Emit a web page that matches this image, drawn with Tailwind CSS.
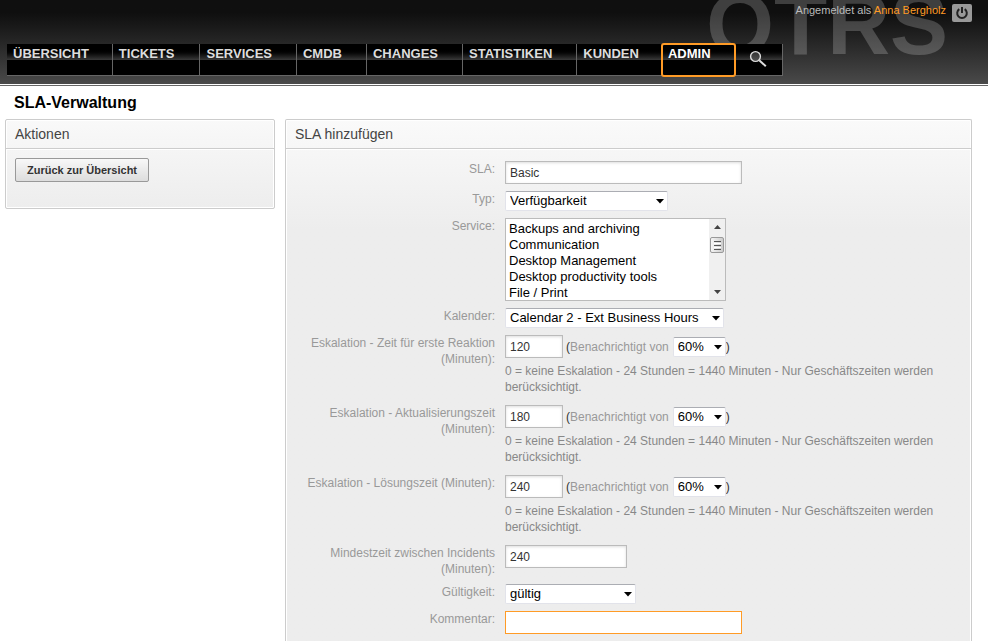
<!DOCTYPE html>
<html lang="de">
<head>
<meta charset="utf-8">
<title>SLA-Verwaltung</title>
<script src="https://cdn.jsdelivr.net/npm/@tailwindcss/browser@4"></script>
</head>
<body class="flex h-screen flex-col overflow-hidden bg-white font-['Liberation_Sans',Arial,sans-serif] text-xs text-[#999]">

<header class="relative flex h-[84px] shrink-0 flex-col justify-end overflow-hidden bg-linear-to-b from-[#0f0f0f] from-15% to-[#4a4a4a]">
  <div aria-hidden="true" class="absolute right-10 -top-7 text-[87px] leading-[104px] font-bold text-white/20">OTRS</div>
  <div class="absolute right-4 top-[3px] flex items-start gap-1.5 text-[11px] leading-[14px] text-[#bbb]">
    <span>Angemeldet als <a href="#" class="text-[#ff9b26]">Anna Bergholz</a></span>
    <button type="button" aria-label="Abmelden" class="mt-px flex h-[18px] w-5 items-center justify-center rounded-xs bg-[#999]">
      <svg class="size-3.5" viewBox="0 0 14 14" fill="none" stroke="#222" stroke-width="2"><path d="M4.3 3.2a4.8 4.8 0 1 0 5.4 0M7 1v6"/></svg>
    </button>
  </div>
  <nav class="relative mb-2 ml-[7px] flex h-8 w-max border-b border-[#666] bg-black bg-linear-to-b from-black from-30% to-[#3a3a3a] bg-[length:100%_16px] bg-no-repeat text-[13px] leading-[20px] font-bold text-[#ddd]">
    <a href="#" class="border-r border-[#666] pl-1.5 pr-[23px]">ÜBERSICHT</a>
    <a href="#" class="border-r border-[#666] pl-1.5 pr-[25px]">TICKETS</a>
    <a href="#" class="border-r border-[#666] pl-1.5 pr-6">SERVICES</a>
    <a href="#" class="border-r border-[#666] pl-1.5 pr-6">CMDB</a>
    <a href="#" class="border-r border-[#666] pl-1.5 pr-6">CHANGES</a>
    <a href="#" class="border-r border-[#666] pl-1.5 pr-6">STATISTIKEN</a>
    <a href="#" class="pl-1.5 pr-[23px]">KUNDEN</a>
    <a href="#" class="-mb-px rounded-xs pl-1.5 pr-6 text-white outline-2 -outline-offset-1 outline-[#ff9b26]">ADMIN</a>
    <a href="#" aria-label="Suche" class="flex w-12 items-start justify-center border-r border-[#666] pt-1.5">
      <svg class="size-[18px]" viewBox="0 0 18 18" fill="none" stroke="#ddd"><circle cx="6.5" cy="6.5" r="4.9" fill="#666" fill-opacity=".5" stroke-width="1.4"/><path d="M10.2 10.2l6.6 6" stroke-width="2"/></svg>
    </a>
  </nav>
</header>
<div class="mt-px shrink-0 border-t border-[#666]"></div>

<h1 class="mt-2 ml-3.5 text-base leading-[18px] font-bold text-black">SLA-Verwaltung</h1>

<main class="mt-[7px] mr-4 ml-[5px] flex min-h-0 flex-1 gap-2.5">
  <aside class="w-[270px] shrink-0 self-start rounded-xs border border-[#ccc] bg-linear-to-b from-[#f9f9f9] to-[#ededed] pb-[26px] shadow-[inset_0_0_0_1px_#fff]">
    <h2 class="border-b border-[#ccc] px-[9px] py-1.5 text-sm leading-4 text-[#444] shadow-[0_1px_0_#fff]">Aktionen</h2>
    <button type="button" class="mt-[9px] ml-[9px] block h-6 rounded-xs border border-[#999] bg-linear-to-b from-[#f8f8f8] to-[#ddd] px-[11px] text-[11px] font-bold text-[#333]">Zurück zur Übersicht</button>
  </aside>

  <section class="min-w-0 flex-1 overflow-hidden rounded-t-xs border border-b-0 border-[#ccc] bg-linear-to-b from-[#fafafa] to-[#ededed] to-[110px] shadow-[inset_1px_1px_0_#fff,inset_-1px_0_0_#fff]">
    <h2 class="border-b border-[#ccc] px-[9px] py-1.5 text-sm leading-4 text-[#444] shadow-[0_1px_0_#fff]">SLA hinzufügen</h2>
    <form class="grid grid-cols-[209px_1fr] gap-x-2.5 gap-y-[7px] pt-3 pr-5 leading-4">
      <label for="sla" class="text-right">SLA:</label>
      <div class="flex"><input id="sla" value="Basic" class="h-[23px] w-[237px] border border-[#bbb] bg-white px-1 text-xs text-[#333] shadow-[inset_0_1px_3px_#ddd]"></div>

      <label for="typ" class="text-right">Typ:</label>
      <div class="relative w-[163px]">
        <select id="typ" class="block h-5 w-full appearance-none rounded-xs border border-[#e2e3ea] border-t-[#abadb3] bg-white pl-1 text-[13px] leading-4 text-black"><option>Verfügbarkeit</option></select>
        <svg class="pointer-events-none absolute top-2 right-1 h-[5px] w-2" viewBox="0 0 8 5"><path d="M0 0h8L4 4.5z"/></svg>
      </div>

      <label for="service" class="text-right">Service:</label>
      <div class="flex h-[83px] w-[221px] border border-[#bbb] bg-white">
        <select id="service" multiple size="5" class="min-w-0 flex-1 overflow-hidden pt-0.5 text-[13px] text-black [scrollbar-width:none]">
          <option class="h-4 p-0 pl-[3px] leading-4">Backups and archiving</option>
          <option class="h-4 p-0 pl-[3px] leading-4">Communication</option>
          <option class="h-4 p-0 pl-[3px] leading-4">Desktop Management</option>
          <option class="h-4 p-0 pl-[3px] leading-4">Desktop productivity tools</option>
          <option class="h-4 p-0 pl-[3px] leading-4">File / Print</option>
        </select>
        <div aria-hidden="true" class="flex w-4 flex-col items-center bg-[#f0f0f0] py-1.5">
          <svg class="h-1 w-[7px]" viewBox="0 0 7 4" fill="#444"><path d="M0 4h7L3.500 0z"/></svg>
          <div class="mt-2 flex h-4 w-3.5 flex-col items-center justify-center gap-px rounded-xs border border-[#999] bg-linear-to-r from-[#f5f5f5] to-[#ccc]">
            <i class="h-px w-[7px] bg-[#555]"></i><i class="h-px w-[7px] bg-white"></i><i class="h-px w-[7px] bg-[#555]"></i><i class="h-px w-[7px] bg-white"></i><i class="h-px w-[7px] bg-[#555]"></i>
          </div>
          <svg class="mt-auto h-1 w-[7px]" viewBox="0 0 7 4" fill="#444"><path d="M0 0h7L3.500 4z"/></svg>
        </div>
      </div>

      <label for="kalender" class="text-right">Kalender:</label>
      <div class="relative w-[219px]">
        <select id="kalender" class="block h-5 w-full appearance-none rounded-xs border border-[#e2e3ea] border-t-[#abadb3] bg-white pl-1 text-[13px] leading-4 text-black"><option>Calendar 2 - Ext Business Hours</option></select>
        <svg class="pointer-events-none absolute top-2 right-1 h-[5px] w-2" viewBox="0 0 8 5"><path d="M0 0h8L4 4.5z"/></svg>
      </div>

      <label for="reaktion" class="text-right">Eskalation - Zeit für erste Reaktion (Minuten):</label>
      <div class="pb-[3px]">
        <div class="flex items-center">
          <input id="reaktion" value="120" class="h-[23px] w-[58px] border border-[#bbb] bg-white px-1 text-xs text-[#333] shadow-[inset_0_1px_3px_#ddd]">
          <label for="reaktion-n" class="mr-1 ml-[3px]"><span class="text-[#333]">(</span>Benachrichtigt von</label>
          <div class="relative w-[53px]">
            <select id="reaktion-n" class="block h-5 w-full appearance-none rounded-xs border border-[#e2e3ea] border-t-[#abadb3] bg-white pl-1 text-[13px] leading-4 text-black"><option>60%</option></select>
            <svg class="pointer-events-none absolute top-2 right-1 h-[5px] w-2" viewBox="0 0 8 5"><path d="M0 0h8L4 4.5z"/></svg>
          </div>
          <span class="text-[#333]">)</span>
        </div>
        <p class="mt-[5px] text-[#888]">0 = keine Eskalation - 24 Stunden = 1440 Minuten - Nur Geschäftszeiten werden berücksichtigt.</p>
      </div>

      <label for="aktual" class="text-right">Eskalation - Aktualisierungszeit (Minuten):</label>
      <div class="pb-[3px]">
        <div class="flex items-center">
          <input id="aktual" value="180" class="h-[23px] w-[58px] border border-[#bbb] bg-white px-1 text-xs text-[#333] shadow-[inset_0_1px_3px_#ddd]">
          <label for="aktual-n" class="mr-1 ml-[3px]"><span class="text-[#333]">(</span>Benachrichtigt von</label>
          <div class="relative w-[53px]">
            <select id="aktual-n" class="block h-5 w-full appearance-none rounded-xs border border-[#e2e3ea] border-t-[#abadb3] bg-white pl-1 text-[13px] leading-4 text-black"><option>60%</option></select>
            <svg class="pointer-events-none absolute top-2 right-1 h-[5px] w-2" viewBox="0 0 8 5"><path d="M0 0h8L4 4.5z"/></svg>
          </div>
          <span class="text-[#333]">)</span>
        </div>
        <p class="mt-[5px] text-[#888]">0 = keine Eskalation - 24 Stunden = 1440 Minuten - Nur Geschäftszeiten werden berücksichtigt.</p>
      </div>

      <label for="loesung" class="text-right">Eskalation - Lösungszeit (Minuten):</label>
      <div class="pb-[3px]">
        <div class="flex items-center">
          <input id="loesung" value="240" class="h-[23px] w-[58px] border border-[#bbb] bg-white px-1 text-xs text-[#333] shadow-[inset_0_1px_3px_#ddd]">
          <label for="loesung-n" class="mr-1 ml-[3px]"><span class="text-[#333]">(</span>Benachrichtigt von</label>
          <div class="relative w-[53px]">
            <select id="loesung-n" class="block h-5 w-full appearance-none rounded-xs border border-[#e2e3ea] border-t-[#abadb3] bg-white pl-1 text-[13px] leading-4 text-black"><option>60%</option></select>
            <svg class="pointer-events-none absolute top-2 right-1 h-[5px] w-2" viewBox="0 0 8 5"><path d="M0 0h8L4 4.5z"/></svg>
          </div>
          <span class="text-[#333]">)</span>
        </div>
        <p class="mt-[5px] text-[#888]">0 = keine Eskalation - 24 Stunden = 1440 Minuten - Nur Geschäftszeiten werden berücksichtigt.</p>
      </div>

      <label for="mindest" class="text-right">Mindestzeit zwischen Incidents (Minuten):</label>
      <div><input id="mindest" value="240" class="block h-[23px] w-[122px] border border-[#bbb] bg-white px-1 text-xs text-[#333] shadow-[inset_0_1px_3px_#ddd]"></div>

      <label for="gueltig" class="text-right">Gültigkeit:</label>
      <div class="relative w-[131px]">
        <select id="gueltig" class="block h-5 w-full appearance-none rounded-xs border border-[#e2e3ea] border-t-[#abadb3] bg-white pl-1 text-[13px] leading-4 text-black"><option>gültig</option></select>
        <svg class="pointer-events-none absolute top-2 right-1 h-[5px] w-2" viewBox="0 0 8 5"><path d="M0 0h8L4 4.5z"/></svg>
      </div>

      <label for="kommentar" class="text-right">Kommentar:</label>
      <div><input id="kommentar" class="block h-[23px] w-[237px] bg-white px-1 text-xs text-[#333] outline-1 -outline-offset-1 outline-[#ff9b26]"></div>
    </form>
  </section>
</main>
</body>
</html>
